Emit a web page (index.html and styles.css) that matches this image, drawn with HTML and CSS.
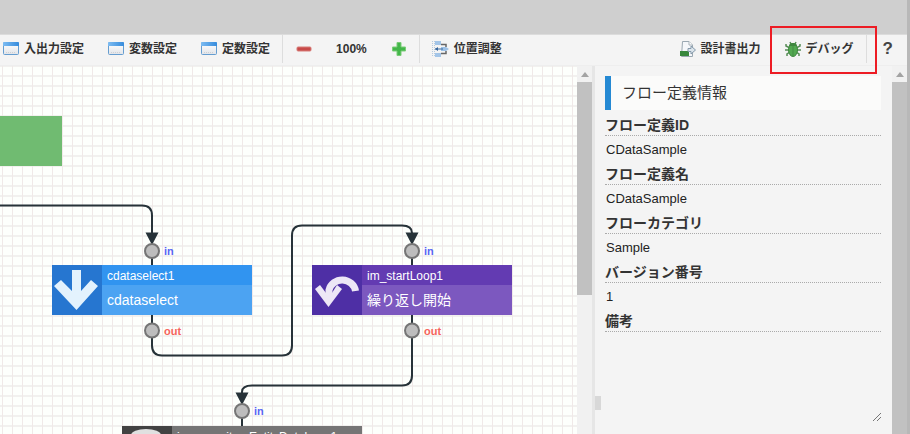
FILE: index.html
```html
<!DOCTYPE html>
<html lang="ja">
<head>
<meta charset="utf-8">
<title>フロー定義</title>
<link rel="stylesheet" href="styles.css">
</head>
<body>
<svg class="defs" aria-hidden="true">
  <defs>
    <linearGradient id="bar" x1="0" y1="0" x2="1" y2="0"><stop offset="0" stop-color="#7dbcf2"/><stop offset="1" stop-color="#358bdc"/></linearGradient>
    <linearGradient id="pane" x1="0" y1="0" x2="0" y2="1"><stop offset="0" stop-color="#fff"/><stop offset="1" stop-color="#e2e4e8"/></linearGradient>
    <symbol id="window" viewBox="0 0 16 14">
      <rect x=".5" y=".5" width="15" height="12" rx="1" fill="url(#pane)" stroke="#659dd0"/>
      <path d="M0 1Q0 0 1 0H15Q16 0 16 1V4H0Z" fill="url(#bar)"/>
      <path d="M3 10.500H13" stroke="#ccd0d5" stroke-dasharray="1 1"/>
    </symbol>
  </defs>
</svg>
<header class="titlebar"></header>
<nav class="toolbar">
  <div class="group settings">
    <button class="tool"><svg width="16" height="14"><use href="#window"/></svg>入出力設定</button>
    <button class="tool"><svg width="16" height="14"><use href="#window"/></svg>変数設定</button>
    <button class="tool"><svg width="16" height="14"><use href="#window"/></svg>定数設定</button>
  </div>
  <div class="group zoom">
    <button class="tool" aria-label="縮小"><svg width="16" height="16"><rect x="1" y="6" width="14" height="4" rx="1" fill="#c84a49" stroke="#d77c79" stroke-width="1"/></svg></button>
    <span>100%</span>
    <button class="tool" aria-label="拡大"><svg width="16" height="16"><path d="M6 1.500H10V6H14.500V10H10V14.500H6V10H1.500V6H6Z" fill="#43b649" stroke="#7bcc78"/></svg></button>
  </div>
  <div class="group adjust">
    <button class="tool"><svg width="17" height="16"><path d="M.5 0V16M2.500 0V16" stroke="#b5cbe0" stroke-dasharray="1 1"/><rect x="3" y="0" width="6" height="4" fill="#a3c5e8"/><rect x="3" y="12" width="6" height="4" fill="#a3c5e8"/><path d="M9 3.500H14V6M14 10V12.500H9" fill="none" stroke="#666" stroke-width="1.500"/><path d="M9 6H14L17 8L14 10H9Z" fill="#9bc0e6"/><path d="M11 8H3" stroke="#35669d"/><path d="M3 8L6 6V10Z" fill="#35669d"/></svg>位置調整</button>
  </div>
  <div class="group output">
    <button class="tool"><svg width="16" height="16"><path d="M2.500.5H9L12.500 4V15.500H1.500Z" fill="#f5f7fa" stroke="#9ba8b2"/><path d="M9 .5V4H12.500" fill="#fff" stroke="#a6b0b8"/><rect x="0" y="10" width="9" height="5" fill="#38873c"/><path d="M8 7.500H11V5L15.500 9L11 13V10.500H8Z" fill="#dce5ec" stroke="#8499aa"/></svg>設計書出力</button>
    <div class="debug"><button class="tool"><svg width="16" height="16"><path d="M5 1L6 3M11 1L10 3M1 3V5L5 7M15 3V5L11 7M0 9H16M2 15V13L5 11M14 15V13L11 11" stroke="#568c56" stroke-width="1.500" fill="none"/><ellipse cx="8" cy="9" rx="4.500" ry="6.500" fill="#52a950" stroke="#3f873f"/><path d="M4 5Q4 2 8 2T12 5Z" fill="#3f873f"/><path d="M8 5V15" stroke="#458d45"/></svg>デバッグ</button></div>
  </div>
  <button class="tool help">?</button>
</nav>
<main class="workspace">
  <section class="canvas" aria-label="フロー">
    <svg class="wires" width="576" height="368" fill="none" stroke="#263238" stroke-width="2">
      <path d="M0 139.500H142Q152 139.500 152 149.500V200M152 249V279.500Q152 289.500 162 289.500H282Q292 289.500 292 279.500V169.500Q292 159.500 302 159.500H402Q412 159.500 412 167V200M412 249V309.500Q412 319.500 402 319.500H252Q242 319.500 242 326V360"/>
      <g fill="#263238" stroke="none"><path d="M145.500 166.500H158.500L152 179ZM405.500 166.500H418.500L412 179ZM235.500 326.500H248.500L242 339Z"/></g>
      <g fill="#bdbdbd" stroke="#757575"><circle cx="152" cy="185" r="7"/><circle cx="412" cy="185" r="7"/><circle cx="152" cy="264.500" r="7"/><circle cx="412" cy="264.500" r="7"/><circle cx="242" cy="345" r="7"/></g>
    </svg>
    <div class="node start"></div>
    <article class="node select">
      <svg class="glyph" width="50" height="50"><path d="M20 5H29V26L39 15L46 21L24.500 45L2 21L9 15L20 26Z" fill="#e3f2fd"/></svg>
      <div class="name">cdataselect1</div><div class="kind">cdataselect</div>
    </article>
    <article class="node loop">
      <svg class="glyph" width="50" height="50"><path d="M17 33V25A13.500 13 0 0 1 43.500 26" fill="none" stroke="#ede7f6" stroke-width="7"/><path d="M3 24L8 20L14 28H20L25 20L30 24L16.500 42Z" fill="#ede7f6"/></svg>
      <div class="name">im_startLoop1</div><div class="kind">繰り返し開始</div>
    </article>
    <article class="node repository">
      <svg class="glyph" width="50" height="50"><path d="M9 9V40Q24 50 39 40V9Z" fill="#bdbdbd"/><ellipse cx="24" cy="9" rx="15" ry="6" fill="#e0e0e0"/></svg>
      <div class="name">im_repositoryEntityDatabase1</div><div class="kind"></div>
    </article>
    <span class="port in first">in</span><span class="port out first">out</span>
    <span class="port in second">in</span><span class="port out second">out</span>
    <span class="port in third">in</span>
  </section>
  <div class="scroll short"><i></i><b></b></div>
  <aside class="panel">
    <h1>フロー定義情報</h1>
    <dl>
      <dt>フロー定義ID</dt><dd>CDataSample</dd>
      <dt>フロー定義名</dt><dd>CDataSample</dd>
      <dt>フローカテゴリ</dt><dd>Sample</dd>
      <dt>バージョン番号</dt><dd>1</dd>
      <dt>備考</dt><dd></dd>
    </dl>
    <span class="grip"></span>
    <svg class="resize" width="10" height="10"><path d="M1 9L9 1M5 9L9 5" stroke="#777"/></svg>
  </aside>
  <div class="scroll"><i></i><b></b></div>
</main>
</body>
</html>
```

FILE: styles.css
```css
* { box-sizing: border-box; }
body { margin: 0; height: 100vh; display: flex; flex-direction: column; overflow: hidden; border-right: 3px solid #b8b8b8; background: #f4f4f4; color: #333; font-family: "Liberation Sans", "Noto Sans CJK JP", sans-serif; }
.defs { position: absolute; width: 0; height: 0; }
.titlebar { flex: 0 0 34px; background: #cfcfcf; }
.toolbar { flex: 0 0 32px; display: flex; align-items: stretch; padding-bottom: 2px; background: #f4f4f4; border-top: 1px solid #dcdcdc; border-bottom: 1px solid #eee; font-size: 12px; font-weight: bold; }
.group { display: flex; align-items: center; border-right: 1px solid #ddd; }
.tool { display: flex; align-items: center; gap: 5px; padding: 0; border: 0; background: none; color: #333; font: inherit; line-height: 18px; white-space: nowrap; }
.settings { gap: 24px; padding: 0 12px 0 3px; }
.zoom { gap: 24px; padding: 0 12px 0 13px; }
.adjust { padding-left: 12px; border: 0; }
.output { margin-left: auto; gap: 24px; padding-right: 12px; }
.debug { position: relative; }
.debug::after { content: ""; position: absolute; inset: -14px -23px -16px -15px; border: 2px solid #ed1c24; z-index: 5; pointer-events: none; }
.help { padding: 0 14px 0 16px; font-size: 17px; color: #444; }
.workspace { flex: 1; min-height: 0; display: flex; }
.canvas { position: relative; flex: 1; min-width: 0; overflow: hidden; background-color: #fdfffc; background-image: linear-gradient(90deg, #f0e9e8 1px, transparent 1px), linear-gradient(#f2f1ef 2px, transparent 2px); background-size: 10px 10px; background-position: 2px 9px; }
.wires { position: absolute; inset: 0; }
.node { position: absolute; height: 50px; display: grid; grid-template: 20px 30px / 50px 1fr; color: #fff; }
.glyph { grid-row: 1 / 3; }
.name, .kind { padding-left: 5px; white-space: nowrap; }
.name { font-size: 12px; line-height: 22px; }
.kind { font-size: 14px; line-height: 30px; }
.start { left: -138px; top: 50px; width: 200px; background: #70bb71; }
.select { left: 52px; top: 199px; width: 200px; background: #3194f0; }
.select .glyph { background: #2676d0; }
.select .kind { background: #4ca3f2; }
.loop { left: 312px; top: 199px; width: 200px; background: #633bb2; }
.loop .glyph { background: #4e2fa5; }
.loop .kind { background: #7c58bf; }
.repository { left: 122px; top: 360px; width: 240px; background: #757575; }
.repository .glyph { background: #424242; }
.port { position: absolute; font-size: 11px; font-weight: bold; line-height: 12px; }
.in { color: #5966f5; top: 179px; }
.out { color: #f6645d; top: 259px; }
.first { left: 164px; }
.second { left: 424px; }
.third { left: 254px; top: 339px; }
.scroll { flex: 0 0 15px; display: flex; flex-direction: column; background: #f1f1f1; }
.scroll i { flex: 0 0 16px; display: grid; place-items: center; }
.scroll i::before { content: ""; border: 4px solid transparent; border-top: 0; border-bottom: 5px solid #a3a3a3; }
.scroll b { flex: 1; background: #c1c1c1; }
.short b { flex: 0 0 58%; }
.panel { position: relative; flex: 0 0 300px; padding: 10px 11px 0 10px; border-left: 3px solid #e6e6e6; background: #f4f4f4; }
.panel h1 { margin: 0; padding-left: 11px; border-left: 6px solid #2589d3; background: #fbfbfa; font-size: 15px; font-weight: normal; line-height: 34px; }
dl { margin: 4px 0 0; font-size: 14px; }
dt { height: 22px; border-bottom: 1px dotted #aaa; font-weight: bold; line-height: 22px; }
dd { height: 27px; margin: 0; padding-left: 1px; color: #222; font-size: 13px; line-height: 28px; }
.grip { position: absolute; left: 0; bottom: 24px; width: 6px; height: 14px; background: #d8d8d8; }
.resize { position: absolute; right: 10px; bottom: 12px; }
```
